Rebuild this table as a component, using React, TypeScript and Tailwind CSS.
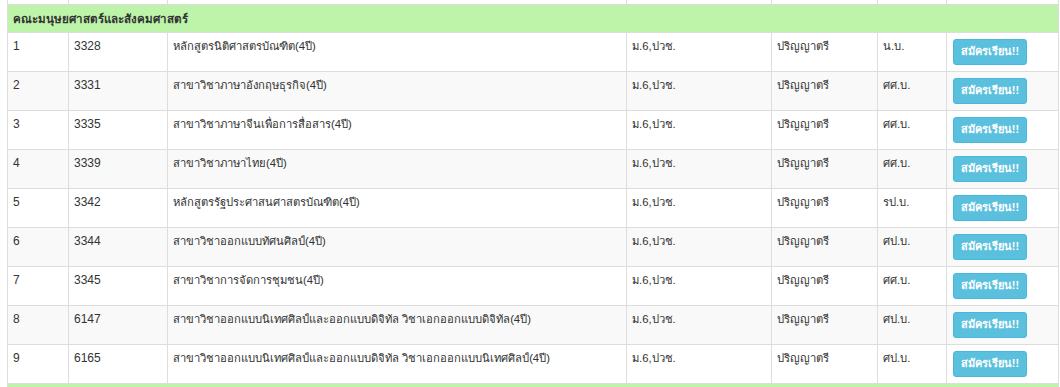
const rows = [
  { no: 1, code: "3328", name: "หลักสูตรนิติศาสตรบัณฑิต(4ปี)", degree: "น.บ." },
  { no: 2, code: "3331", name: "สาขาวิชาภาษาอังกฤษธุรกิจ(4ปี)", degree: "ศศ.บ." },
  { no: 3, code: "3335", name: "สาขาวิชาภาษาจีนเพื่อการสื่อสาร(4ปี)", degree: "ศศ.บ." },
  { no: 4, code: "3339", name: "สาขาวิชาภาษาไทย(4ปี)", degree: "ศศ.บ." },
  { no: 5, code: "3342", name: "หลักสูตรรัฐประศาสนศาสตรบัณฑิต(4ปี)", degree: "รป.บ." },
  { no: 6, code: "3344", name: "สาขาวิชาออกแบบทัศนศิลป์(4ปี)", degree: "ศป.บ." },
  { no: 7, code: "3345", name: "สาขาวิชาการจัดการชุมชน(4ปี)", degree: "ศศ.บ." },
  { no: 8, code: "6147", name: "สาขาวิชาออกแบบนิเทศศิลป์และออกแบบดิจิทัล วิชาเอกออกแบบดิจิทัล(4ปี)", degree: "ศป.บ." },
  { no: 9, code: "6165", name: "สาขาวิชาออกแบบนิเทศศิลป์และออกแบบดิจิทัล วิชาเอกออกแบบนิเทศศิลป์(4ปี)", degree: "ศป.บ." },
];

const cell = "border border-[#dddddd] px-[5px] py-[5px] align-top";
// thai glyphs from the fallback font run wider than the original's, so shrink them a bit
const thai = `${cell} text-[11.25px]`;

export default function App() {
  return (
    <div className="bg-white pl-[7px] h-[387px] overflow-hidden font-['Tahoma','Liberation_Sans','Noto_Sans',sans-serif] text-[12px] leading-[17px] text-[#333333]">
      <table className="w-[1051px] table-fixed border-collapse">
        <colgroup>
          <col className="w-[61px]" />
          <col className="w-[99px]" />
          <col className="w-[459px]" />
          <col className="w-[145px]" />
          <col className="w-[106px]" />
          <col className="w-[69px]" />
          <col className="w-[112px]" />
        </colgroup>
        <tbody>
          <tr className="h-[4px]">
            {Array.from({ length: 7 }).map((_, i) => (
              <td key={i} className="border-x border-b border-[#dddddd] p-0" />
            ))}
          </tr>
          <tr className="bg-[#bdf4aa]">
            <td colSpan={7} className="border border-[#dddddd] px-[5px] py-[5px] font-bold text-[11.6px]">
              คณะมนุษยศาสตร์และสังคมศาสตร์
            </td>
          </tr>
          {rows.map((r) => (
            <tr key={r.no} className={`h-[39px] ${r.no % 2 === 0 ? "bg-[#f9f9f9]" : "bg-white"}`}>
              <td className={cell}>{r.no}</td>
              <td className={cell}>{r.code}</td>
              <td className={thai}>{r.name}</td>
              <td className={thai}>ม.6,ปวช.</td>
              <td className={thai}>ปริญญาตรี</td>
              <td className={thai}>{r.degree}</td>
              <td className="border border-[#dddddd] px-[6px] py-0 align-middle">
                <button className="h-[26px] w-[74px] rounded-[3px] border border-[#46b8da] bg-[#5bc0de] text-[11px] font-bold text-white">
                  สมัครเรียน!!
                </button>
              </td>
            </tr>
          ))}
          <tr className="h-[20px] bg-[#bdf4aa]">
            <td colSpan={7} className="border border-[#dddddd] p-0" />
          </tr>
        </tbody>
      </table>
    </div>
  );
}
